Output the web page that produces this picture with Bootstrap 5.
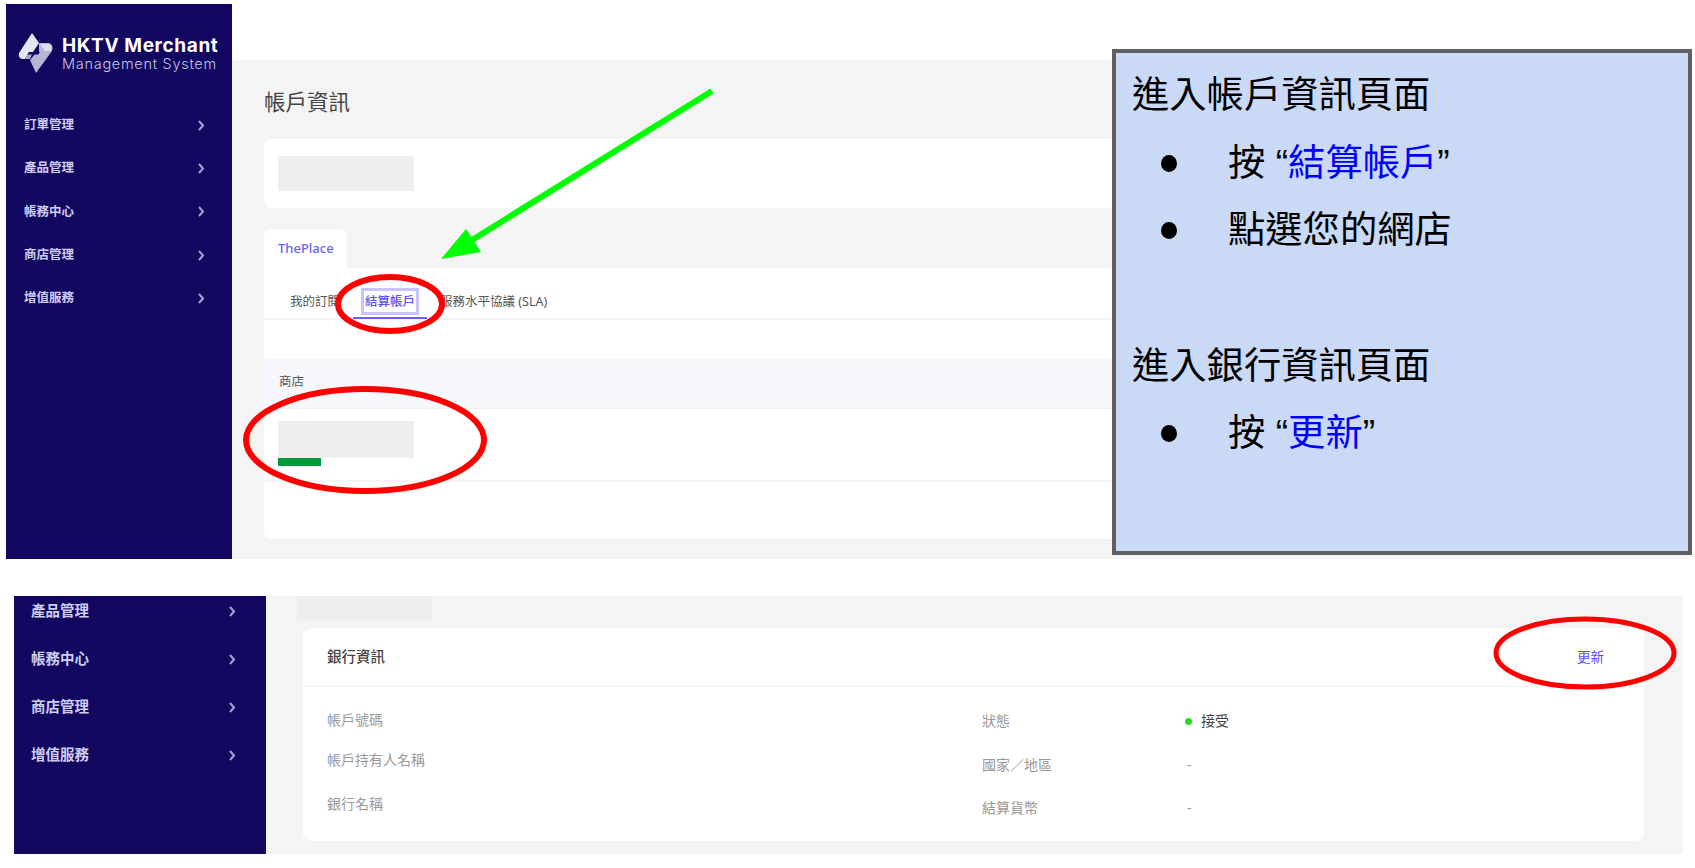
<!DOCTYPE html>
<html lang="zh-Hant">
<head>
    <meta charset="UTF-8">
    <title>帳戶資訊</title>
    <link href="https://cdn.jsdelivr.net/npm/bootstrap@5.3.3/dist/css/bootstrap.min.css" rel="stylesheet">
    <style>
        html, body { margin: 0; background: #fff; }
        body { font-family: "Noto Sans", "Noto Sans CJK TC", sans-serif; color: #444; }
        .slide { position: relative; width: 1695px; height: 868px; overflow: hidden; }

        .shot-a { display: flex; width: 1684px; height: 555px; margin: 4px 0 0 6px; }
        .shot-b { display: flex; width: 1669px; height: 258px; margin: 37px 0 0 14px; overflow: hidden; }

        .side-a, .side-b { flex: none; background: #120860; }
        .side-a { width: 226px; }
        .side-b { width: 252px; }
        .brand { display: flex; height: 100px; padding: 24px 0 0 6px; }
        .brand-text { color: #fff; padding-top: 8px; }
        .brand-name { font-family: "Inter", sans-serif; font-size: 19px; line-height: 20px; font-weight: 700; letter-spacing: .62px; white-space: nowrap; }
        .brand-sub { font-family: "Inter", sans-serif; font-size: 14.5px; line-height: 16px; font-weight: 300; color: #c6c4e4; letter-spacing: .72px; white-space: nowrap; }
        .side-link { display: flex; align-items: center; justify-content: space-between; font-weight: 700; color: #cfcdf3; text-decoration: none; }
        .side-a .side-link { height: 43.2px; padding: 0 27px 0 18px; font-size: 12.5px; }
        .side-b .nav { margin-top: -9px; }
        .side-b .side-link { height: 48px; padding: 0 30px 0 17px; font-size: 14.5px; }
        .chev { width: 8px; height: 11px; fill: none; stroke: #a5a3d2; stroke-width: 2; }

        .main-a, .main-b { flex: 1; background: #f4f4f4; }
        .main-a { margin-top: 56px; padding: 27px 0 0 32px; }
        .main-b { padding: 0 39px 0 37px; }
        .page-title { font-size: 21.5px; line-height: 30px; font-weight: 400; margin: 0 0 22px; color: #444; }
        .sheet { border: 0; border-radius: 8px; background: #fff; }
        .top-sheet { height: 69px; padding: 17px 14px; margin-bottom: 21px; }
        .blank { background: #eee; }
        .blank-a { width: 136px; height: 37px; }
        .blank-b { width: 135px; height: 24px; margin: 0 0 8px -6px; }
        .shop-tab { width: 83px; height: 39px; padding-left: 14px; line-height: 38px; font-size: 13px; font-weight: 500; color: #6a60f6; background: #fff; border-radius: 8px 8px 0 0; }
        .shop-sheet { height: 271px; border-radius: 0 0 8px 8px; }
        .sub-nav { height: 52px; padding-left: 14px; gap: 1px; border-bottom: 2px solid #f4f4f4; }
        .sub-link { height: 51px; padding: 0 12px; line-height: 67px; font-size: 12.5px; color: #555; text-decoration: none; }
        .sub-link.on { color: #5a50ef; font-weight: 500; border-bottom: 2px solid #6a60f6; }
        .sub-link.on span { outline: 3px solid #c9c3fb; outline-offset: 1px; padding: 1px 0; }
        .shop-table { margin: 39px 0 0; }
        .shop-table th { height: 49px; padding: 14px 15px 0; vertical-align: top; font-size: 12.5px; font-weight: 400; color: #555; background: #f7f8fd; border-bottom: 1px solid #eee; }
        .shop-table td { height: 73px; padding: 12px 14px 0; border-bottom: 2px solid #f4f4f4; vertical-align: top; }
        .status-bar { width: 43px; height: 8px; background: #009a3c; }

        .bank-head { display: flex; justify-content: space-between; align-items: center; height: 59px; padding: 0 40px 0 24px; border-bottom: 1px solid #f2f2f2; }
        .bank-title { font-size: 14.5px; font-weight: 500; color: #444; }
        .bank-edit { font-size: 13.5px; color: #5a50ff; text-decoration: none; }
        .bank-sheet { height: 213px; }
        .field-cols { display: flex; padding-left: 24px; }
        .field-col { width: 655px; }
        .field { display: flex; line-height: 20px; font-size: 14px; color: #999; }
        .field-key { width: 203px; }
        .field-val { color: #444; display: flex; align-items: center; gap: 9px; }
        .field-none { color: #999; padding-left: 2px; }
        .dot { width: 7px; height: 7px; border-radius: 50%; background: #22dd22; }
        .row-l1 { margin-top: 23px; }
        .row-l2 { margin-top: 20px; }
        .row-l3 { margin-top: 24px; }
        .row-r1 { margin-top: 24px; }
        .row-r2 { margin-top: 24px; }
        .row-r3 { margin-top: 23px; }

        .note-box { position: absolute; left: 1112px; top: 49px; width: 580px; height: 506px; padding: 9px 0 0 16px; background: #c9d9f6; border: 4px solid #606060; font-family: "Liberation Sans", "Noto Sans CJK TC", sans-serif; font-size: 37.3px; line-height: 67.5px; color: #000; }
        .note-list { list-style: none; margin: 0; padding: 0; }
        .note-list li { display: flex; align-items: center; }
        .note-list li::before { content: ""; flex: none; width: 16px; height: 17px; margin: 0 51px 0 29px; border-radius: 50%; background: #000; }
        .note-gap { height: 68px; }
        .note-blue { color: #0000ff; }
        .marks { position: absolute; left: 0; top: 0; pointer-events: none; }
    </style>
</head>
<body>
<div class="slide">

    <!-- top capture -->
    <div class="shot-a">
        <div class="side-a">
            <div class="brand">
                <svg width="50" height="50" viewBox="0 0 50 50" class="flex-none">
                    <path d="M20 5 L27 15 L21 24 H17 L13 31 H10 Q6 30 7 25 Z" fill="#e6e6f2"/>
                    <path d="M13 31 L17 24 H21 L18 31 Z" fill="#a9a9cc"/>
                    <path d="M27 15 H37 Q42 17 40 23 L24 45 L18 32 L23 26 H27 Z" fill="#b5b5d6"/>
                    <path d="M28 16 H37 Q41 18 39 23 L33 23 Z" fill="#dcdcec"/>
                    <path d="M17 24 H28 L26 26.500 H15.500 Z" fill="#120860"/>
                </svg>
                <div class="brand-text">
                    <div class="brand-name">HKTV Merchant</div>
                    <div class="brand-sub">Management System</div>
                </div>
            </div>
            <nav class="nav flex-column">
                <a class="side-link" href="#">訂單管理<svg class="chev" viewBox="0 0 8 11"><polyline points="2,1 6,5.5 2,10"/></svg></a>
                <a class="side-link" href="#">產品管理<svg class="chev" viewBox="0 0 8 11"><polyline points="2,1 6,5.5 2,10"/></svg></a>
                <a class="side-link" href="#">帳務中心<svg class="chev" viewBox="0 0 8 11"><polyline points="2,1 6,5.5 2,10"/></svg></a>
                <a class="side-link" href="#">商店管理<svg class="chev" viewBox="0 0 8 11"><polyline points="2,1 6,5.5 2,10"/></svg></a>
                <a class="side-link" href="#">增值服務<svg class="chev" viewBox="0 0 8 11"><polyline points="2,1 6,5.5 2,10"/></svg></a>
            </nav>
        </div>
        <div class="main-a">
            <h1 class="page-title">帳戶資訊</h1>
            <div class="card sheet top-sheet"><div class="blank blank-a"></div></div>
            <div class="shop-tab">ThePlace</div>
            <div class="card sheet shop-sheet">
                <nav class="nav sub-nav">
                    <a class="sub-link" href="#">我的訂閱</a>
                    <a class="sub-link on" href="#"><span>結算帳戶</span></a>
                    <a class="sub-link" href="#">服務水平協議 (SLA)</a>
                </nav>
                <table class="table shop-table">
                    <thead><tr><th>商店</th></tr></thead>
                    <tbody><tr><td><div class="blank blank-a"></div><div class="status-bar"></div></td></tr></tbody>
                </table>
            </div>
        </div>
    </div>

    <!-- bottom capture -->
    <div class="shot-b">
        <div class="side-b">
            <nav class="nav flex-column">
                <a class="side-link" href="#">產品管理<svg class="chev" viewBox="0 0 8 11"><polyline points="2,1 6,5.5 2,10"/></svg></a>
                <a class="side-link" href="#">帳務中心<svg class="chev" viewBox="0 0 8 11"><polyline points="2,1 6,5.5 2,10"/></svg></a>
                <a class="side-link" href="#">商店管理<svg class="chev" viewBox="0 0 8 11"><polyline points="2,1 6,5.5 2,10"/></svg></a>
                <a class="side-link" href="#">增值服務<svg class="chev" viewBox="0 0 8 11"><polyline points="2,1 6,5.5 2,10"/></svg></a>
            </nav>
        </div>
        <div class="main-b">
            <div class="blank blank-b"></div>
            <div class="card sheet bank-sheet">
                <div class="bank-head">
                    <span class="bank-title">銀行資訊</span>
                    <a class="bank-edit" href="#">更新</a>
                </div>
                <div class="field-cols">
                    <div class="field-col">
                        <div class="field row-l1"><span class="field-key">帳戶號碼</span></div>
                        <div class="field row-l2"><span class="field-key">帳戶持有人名稱</span></div>
                        <div class="field row-l3"><span class="field-key">銀行名稱</span></div>
                    </div>
                    <div class="field-col">
                        <div class="field row-r1"><span class="field-key">狀態</span><span class="field-val"><span class="dot"></span>接受</span></div>
                        <div class="field row-r2"><span class="field-key">國家／地區</span><span class="field-none">-</span></div>
                        <div class="field row-r3"><span class="field-key">結算貨幣</span><span class="field-none">-</span></div>
                    </div>
                </div>
            </div>
        </div>
    </div>

    <!-- instruction box -->
    <div class="note-box">
        <div>進入帳戶資訊頁面</div>
        <ul class="note-list">
            <li><span>按 “<span class="note-blue">結算帳戶</span>”</span></li>
            <li><span>點選您的網店</span></li>
        </ul>
        <div class="note-gap"></div>
        <div>進入銀行資訊頁面</div>
        <ul class="note-list">
            <li><span>按 “<span class="note-blue">更新</span>”</span></li>
        </ul>
    </div>

    <!-- annotations drawn over the captures -->
    <svg class="marks" width="1695" height="868" viewBox="0 0 1695 868">
        <line x1="712" y1="91" x2="472" y2="240" stroke="#00ff00" stroke-width="6"/>
        <polygon points="441,259 466,229 481,252" fill="#00ff00"/>
        <g fill="none" stroke="#ff0000">
            <ellipse cx="390" cy="304" rx="52" ry="27" stroke-width="6"/>
            <ellipse cx="365" cy="440" rx="119" ry="51" stroke-width="6"/>
            <ellipse cx="1585" cy="653" rx="89" ry="34" stroke-width="5"/>
        </g>
    </svg>
</div>
<script src="https://cdn.jsdelivr.net/npm/bootstrap@5.3.3/dist/js/bootstrap.bundle.min.js"></script>
</body>
</html>
